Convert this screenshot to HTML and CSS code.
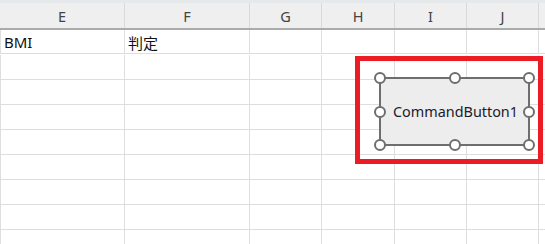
FILE: index.html
```html
<!DOCTYPE html>
<html lang="ja">
<head>
<meta charset="utf-8">
<link rel="stylesheet" href="styles.css">
</head>
<body>
<div class="sheet">
  <div class="topbar"></div>
  <div class="header">
    <div class="hcell">E</div>
    <div class="hcell">F</div>
    <div class="hcell">G</div>
    <div class="hcell">H</div>
    <div class="hcell">I</div>
    <div class="hcell">J</div>
    <div class="hcell last"></div>
  </div>
  <div class="grid">
    <div class="cell first">BMI</div><div class="cell">判定</div><div class="cell"></div><div class="cell"></div><div class="cell"></div><div class="cell"></div><div class="cell last"></div>
    <div class="cell first"></div><div class="cell"></div><div class="cell"></div><div class="cell"></div><div class="cell"></div><div class="cell"></div><div class="cell last"></div>
    <div class="cell first"></div><div class="cell"></div><div class="cell"></div><div class="cell"></div><div class="cell"></div><div class="cell"></div><div class="cell last"></div>
    <div class="cell first"></div><div class="cell"></div><div class="cell"></div><div class="cell"></div><div class="cell"></div><div class="cell"></div><div class="cell last"></div>
    <div class="cell first"></div><div class="cell"></div><div class="cell"></div><div class="cell"></div><div class="cell"></div><div class="cell"></div><div class="cell last"></div>
    <div class="cell first"></div><div class="cell"></div><div class="cell"></div><div class="cell"></div><div class="cell"></div><div class="cell"></div><div class="cell last"></div>
    <div class="cell first"></div><div class="cell"></div><div class="cell"></div><div class="cell"></div><div class="cell"></div><div class="cell"></div><div class="cell last"></div>
    <div class="cell first"></div><div class="cell"></div><div class="cell"></div><div class="cell"></div><div class="cell"></div><div class="cell"></div><div class="cell last"></div>
    <div class="cell first"></div><div class="cell"></div><div class="cell"></div><div class="cell"></div><div class="cell"></div><div class="cell"></div><div class="cell last"></div>
  </div>

  <div class="highlight"></div>
  <div class="cmdbtn">
    <span class="label">CommandButton1</span>
    <span class="handle h-tl"></span>
    <span class="handle h-tc"></span>
    <span class="handle h-tr"></span>
    <span class="handle h-ml"></span>
    <span class="handle h-mr"></span>
    <span class="handle h-bl"></span>
    <span class="handle h-bc"></span>
    <span class="handle h-br"></span>
  </div>
</div>
</body>
</html>
```
FILE: styles.css
```css
* { box-sizing: border-box; }
html, body {
  margin: 0;
  padding: 0;
  background: #ffffff;
  overflow: hidden;
}
body {
  font-family: "Noto Sans", "Liberation Sans", "Noto Sans CJK JP", sans-serif;
}
.sheet {
  position: relative;
  width: 545px;
  height: 244px;
  overflow: hidden;
}
.topbar {
  height: 3px;
  background: #e6e9ec;
}
.header {
  display: grid;
  grid-template-columns: 125px 125px 72px 73px 72px 72px 1fr;
  height: 27px;
  background: #efefef;
  border-bottom: 2px solid #ababab;
}
.hcell {
  display: flex;
  align-items: center;
  justify-content: center;
  border-right: 1px solid #d9d9d9;
  font-size: 14.5px;
  color: #444444;
  padding-top: 1px;
}
.hcell.last { border-right: none; }
.grid {
  display: grid;
  grid-template-columns: 125px 125px 72px 73px 72px 72px 1fr;
  grid-auto-rows: 25px;
}
.grid > .cell:nth-child(-n+7) { height: 24px; }
.cell {
  border-right: 1px solid #dedede;
  border-bottom: 1px solid #dedede;
  font-size: 15px;
  color: #111111;
  padding-left: 3px;
  display: flex;
  align-items: center;
  padding-top: 1px;
}
.cell.first { border-left: 1px solid #dedede; }
.cell.last { border-right: none; }

.highlight {
  position: absolute;
  left: 355px;
  top: 56px;
  width: 188px;
  height: 108px;
  border: 5px solid #ec1c24;
}
.cmdbtn {
  position: absolute;
  left: 379px;
  top: 77px;
  width: 151px;
  height: 69px;
  background: #ededed;
  border: 2px solid #6e6e6e;
  display: flex;
  align-items: center;
  justify-content: center;
}
.label {
  font-size: 14.4px;
  color: #1b1b2a;
  padding-left: 2px;
}
.handle {
  position: absolute;
  width: 12px;
  height: 12px;
  border-radius: 50%;
  background: #ffffff;
  border: 2px solid #6e6e6e;
}
.h-tl { left: -7px; top: -7px; }
.h-tc { left: calc(50% - 6px); top: -7px; }
.h-tr { right: -7px; top: -7px; }
.h-ml { left: -7px; top: calc(50% - 6px); }
.h-mr { right: -7px; top: calc(50% - 6px); }
.h-bl { left: -7px; bottom: -7px; }
.h-bc { left: calc(50% - 6px); bottom: -7px; }
.h-br { right: -7px; bottom: -7px; }
```
